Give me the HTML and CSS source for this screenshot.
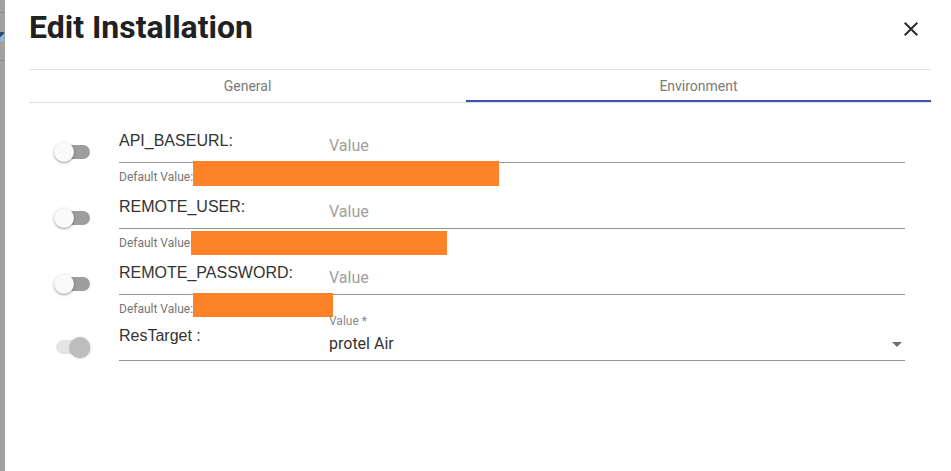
FILE: index.html
```html
<!DOCTYPE html>
<html lang="en">
<head>
<meta charset="utf-8">
<title>Edit Installation</title>
<link rel="stylesheet" href="styles.css">
</head>
<body>
<div class="page">
  <div class="backdrop">
    <span class="bd-line bd-line-1"></span>
    <span class="bd-icon"></span>
    <span class="bd-line bd-line-2"></span>
  </div>
  <div class="dialog">
    <header class="dlg-header">
      <h2 class="dlg-title">Edit Installation</h2>
      <button class="close" aria-label="Close">
        <svg width="24" height="24" viewBox="0 0 24 24"><path d="M19 6.41L17.59 5 12 10.590 6.41 5 5 6.41 10.59 12 5 17.59 6.41 19 12 13.41 17.59 19 19 17.59 13.41 12z" fill="#2b2b2b"/></svg>
      </button>
    </header>
    <nav class="tabs">
      <div class="tab">General</div>
      <div class="tab active">Environment</div>
    </nav>
    <div class="rows">
      <div class="row">
        <div class="toggle-cell"><span class="switch"><span class="track"></span><span class="thumb"></span></span></div>
        <div class="field">
          <div class="field-line"><span class="label">API_BASEURL:</span><span class="input placeholder">Value</span></div>
          <div class="default">Default Value:</div>
        </div>
        <span class="redact redact-1"></span>
      </div>
      <div class="row">
        <div class="toggle-cell"><span class="switch"><span class="track"></span><span class="thumb"></span></span></div>
        <div class="field">
          <div class="field-line"><span class="label">REMOTE_USER:</span><span class="input placeholder">Value</span></div>
          <div class="default">Default Value:</div>
        </div>
        <span class="redact redact-2"></span>
      </div>
      <div class="row">
        <div class="toggle-cell"><span class="switch"><span class="track"></span><span class="thumb"></span></span></div>
        <div class="field">
          <div class="field-line"><span class="label">REMOTE_PASSWORD:</span><span class="input placeholder">Value</span></div>
          <div class="default">Default Value:</div>
        </div>
        <span class="redact redact-3"></span>
      </div>
      <div class="row select-row">
        <div class="toggle-cell"><span class="switch checked disabled"><span class="track"></span><span class="thumb"></span></span></div>
        <div class="field">
          <div class="field-line">
            <span class="label">ResTarget :</span>
            <div class="select">
              <span class="select-label">Value *</span>
              <div class="select-value">
                <span>protel Air</span>
                <svg width="10" height="5" viewBox="7 10 10 5"><path d="M7 10l5 5 5-5z" fill="#707070"/></svg>
              </div>
            </div>
          </div>
        </div>
      </div>
    </div>
  </div>
</div>
</body>
</html>
```
FILE: styles.css
```css
html, body {
  margin: 0;
  padding: 0;
}
body {
  background: #a2a2a2;
  font-family: Roboto, "Liberation Sans", Arial, sans-serif;
}
.page {
  display: flex;
  height: 471px;
  overflow: hidden;
}
.backdrop {
  width: 5px;
  flex: none;
  display: flex;
  flex-direction: column;
}
.bd-line {
  display: block;
  height: 1px;
  background: #8a8a8a;
}
.bd-line-1 { margin-top: 12px; }
.bd-icon {
  display: block;
  margin-top: 19px;
  height: 9px;
  width: 4px;
  background: linear-gradient(135deg, #2d4a7a 0 45%, #8fb8d8 45% 100%);
}
.bd-line-2 { margin-top: 19px; }

.dialog {
  flex: 1;
  background: #fff;
  padding: 0 20px 0 24px;
}
.dlg-header {
  display: flex;
  justify-content: space-between;
  align-items: flex-start;
  height: 69px;
  box-sizing: border-box;
  padding-top: 7px;
}
.dlg-title {
  margin: 0;
  font-size: 32px;
  line-height: 40px;
  font-weight: 700;
  color: #212121;
}
.close {
  border: 0;
  background: none;
  padding: 0;
  margin: 10px 8px 0 0;
  width: 24px;
  height: 24px;
  display: block;
}
.close svg { display: block; }

.tabs {
  display: grid;
  grid-template-columns: 437px 1fr;
  border-top: 1px solid #e0e0e0;
  border-bottom: 1px solid #e0e0e0;
}
.tab {
  height: 32px;
  line-height: 32px;
  text-align: center;
  font-size: 14px;
  color: #7a7a7a;
}
.tab.active {
  box-shadow: inset 0 -2px 0 #3f51b5;
}

.rows {
  padding: 23px 26px 0 0;
}
.row {
  position: relative;
  display: flex;
  height: 66px;
}
.toggle-cell {
  width: 90px;
  flex: none;
  box-sizing: border-box;
  padding: 16px 0 0 25px;
}
.select-row .toggle-cell { padding-top: 13px; }
.switch {
  position: relative;
  display: block;
  width: 36px;
  height: 20px;
}
.track {
  position: absolute;
  left: 2px;
  top: 3px;
  width: 34px;
  height: 14px;
  border-radius: 7px;
  background: #9e9e9e;
}
.thumb {
  position: absolute;
  left: 0;
  top: 0;
  width: 20px;
  height: 20px;
  border-radius: 50%;
  background: #fafafa;
  box-shadow: 0 1px 3px rgba(0,0,0,0.3), 0 1px 1px rgba(0,0,0,0.14);
}
.switch.checked .thumb { left: 16px; }
.switch.disabled .track { background: #e4e4e4; }
.switch.disabled .thumb { background: #bdbdbd; }

.field {
  flex: 1;
  min-width: 0;
}
.field-line {
  display: flex;
  height: 36px;
  border-bottom: 1px solid #949494;
}
.label {
  width: 210px;
  flex: none;
  font-family: "Liberation Sans", Arial, sans-serif;
  font-size: 16px;
  line-height: 20px;
  padding-top: 5px;
  color: #333;
}
.input {
  flex: 1;
  font-size: 16px;
  line-height: 20px;
  padding-top: 10px;
}
.placeholder { color: #a0a0a0; }
.default {
  font-size: 12px;
  line-height: 14px;
  padding-top: 7px;
  color: #757575;
}

.select-row .label { padding-top: 2px; }
.select {
  flex: 1;
  display: flex;
  flex-direction: column;
}
.select-label {
  font-size: 12px;
  line-height: 14px;
  margin-top: -10px;
  color: #8a8a8a;
}
.select-value {
  display: flex;
  align-items: center;
  justify-content: space-between;
  margin-top: 6px;
  font-size: 16px;
  line-height: 20px;
  color: #333;
}
.select-value svg {
  display: block;
  margin-right: 3px;
}

.redact {
  position: absolute;
  background: #fe8228;
  height: 25px;
}
.redact-1 { top: 35px; left: 164px; width: 306px; }
.redact-2 { top: 39px; left: 162px; width: 256px; height: 24px; }
.redact-3 { top: 35px; left: 164px; width: 140px; height: 24px; }
```
